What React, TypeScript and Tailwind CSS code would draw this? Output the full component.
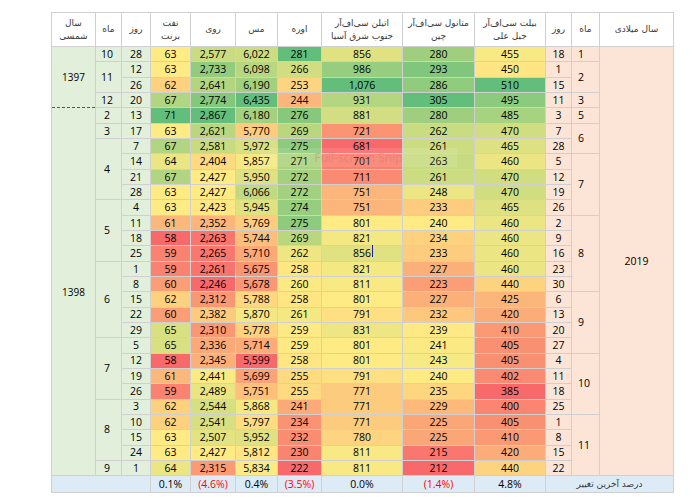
import React from "react"

// brent, zinc, copper, urea, ethylene, methanol, billet
const rows: number[][] = [
  [63, 2577, 6022, 281, 856, 280, 455],
  [63, 2733, 6098, 266, 986, 293, 450],
  [62, 2641, 6190, 253, 1076, 286, 510],
  [67, 2774, 6435, 244, 931, 305, 495],
  [71, 2867, 6180, 276, 881, 280, 485],
  [63, 2621, 5770, 269, 721, 262, 470],
  [67, 2581, 5972, 275, 681, 261, 465],
  [64, 2404, 5857, 271, 701, 263, 460],
  [67, 2427, 5950, 272, 711, 261, 470],
  [63, 2427, 6066, 272, 751, 248, 470],
  [63, 2423, 5945, 274, 751, 233, 465],
  [61, 2352, 5769, 275, 801, 240, 460],
  [58, 2263, 5744, 269, 821, 234, 460],
  [59, 2265, 5710, 262, 856, 233, 460],
  [59, 2261, 5675, 258, 821, 227, 460],
  [60, 2246, 5678, 260, 811, 223, 440],
  [62, 2312, 5788, 258, 801, 227, 425],
  [60, 2382, 5870, 261, 791, 232, 420],
  [65, 2310, 5778, 259, 831, 239, 410],
  [65, 2336, 5714, 259, 801, 241, 405],
  [58, 2345, 5599, 258, 801, 243, 405],
  [61, 2441, 5699, 255, 791, 240, 402],
  [59, 2489, 5751, 255, 771, 235, 385],
  [62, 2544, 5868, 241, 771, 229, 400],
  [62, 2541, 5797, 234, 771, 225, 405],
  [63, 2507, 5952, 232, 780, 225, 410],
  [63, 2427, 5812, 230, 811, 215, 420],
  [64, 2315, 5834, 222, 811, 212, 440],
]

type Group = { label: string; n: number }

const shamsiYears: Group[] = [
  { label: "1397", n: 4 },
  { label: "1398", n: 24 },
]
const shamsiMonths: Group[] = [
  { label: "10", n: 1 }, { label: "11", n: 2 }, { label: "12", n: 1 },
  { label: "2", n: 1 }, { label: "3", n: 1 }, { label: "4", n: 4 },
  { label: "5", n: 4 }, { label: "6", n: 5 }, { label: "7", n: 4 },
  { label: "8", n: 4 }, { label: "9", n: 1 },
]
const shamsiDays = [28, 12, 26, 20, 13, 17, 7, 14, 21, 28, 4, 11, 18, 25, 1, 8, 15, 22, 29, 5, 12, 19, 26, 3, 10, 15, 24, 1]

const miladiMonths: Group[] = [
  { label: "1", n: 1 }, { label: "2", n: 2 }, { label: "3", n: 1 },
  { label: "5", n: 1 }, { label: "6", n: 2 }, { label: "7", n: 4 },
  { label: "8", n: 5 }, { label: "9", n: 4 }, { label: "10", n: 4 },
  { label: "11", n: 4 },
]
const miladiDays = [18, 1, 15, 11, 3, 7, 28, 5, 12, 19, 26, 2, 9, 16, 23, 30, 6, 13, 20, 27, 4, 11, 18, 25, 1, 8, 15, 22]

const footer = [
  { text: "0.1%", neg: false },
  { text: "(4.6%)", neg: true },
  { text: "0.4%", neg: false },
  { text: "(3.5%)", neg: true },
  { text: "0.0%", neg: false },
  { text: "(1.4%)", neg: true },
  { text: "4.8%", neg: false },
]

const headers: string[][] = [
  ["سال", "شمسی"],
  ["ماه"],
  ["روز"],
  ["نفت", "برنت"],
  ["روی"],
  ["مس"],
  ["اوره"],
  ["اتیلن سی‌اف‌آر", "جنوب شرق آسیا"],
  ["متانول سی‌اف‌آر", "چین"],
  ["بیلت سی‌اف‌آر", "جبل علی"],
  ["روز"],
  ["ماه"],
  ["سال میلادی"],
]

const colWidths = [44, 26, 29, 40, 45, 42, 44, 81, 72, 71, 26, 28, 74]

function startsOf(groups: Group[]) {
  const m = new Map<number, Group>()
  let i = 0
  for (const g of groups) {
    m.set(i, g)
    i += g.n
  }
  return m
}

// Excel style 3-colour scale: min red, 50th percentile yellow, max green
function scaleFor(values: number[]) {
  const sorted = [...values].sort((a, b) => a - b)
  const min = sorted[0]
  const max = sorted[sorted.length - 1]
  const pos = (sorted.length - 1) * 0.5
  const lo = Math.floor(pos)
  const mid = sorted[lo] + (sorted[lo + 1] - sorted[lo]) * (pos - lo)
  const red = [248, 105, 107]
  const yel = [255, 235, 132]
  const grn = [99, 190, 123]
  const mix = (a: number[], b: number[], t: number) =>
    `rgb(${a.map((c, k) => Math.round(c + (b[k] - c) * t)).join(",")})`
  return (v: number) =>
    v <= mid ? mix(red, yel, mid === min ? 1 : (v - min) / (mid - min)) : mix(yel, grn, (v - mid) / (max - mid))
}

const scales = rows[0].map((_, c) => scaleFor(rows.map((r) => r[c])))

const fa = "font-[Tahoma,'DejaVu_Sans',sans-serif]"
const cell = "border border-[#d0d0d0] p-0 text-center align-middle"

export default function App() {
  const yStarts = startsOf(shamsiYears)
  const mStarts = startsOf(shamsiMonths)
  const rmStarts = startsOf(miladiMonths)

  return (
    <div className="min-h-[497px] bg-white pl-[51px] pt-[12px]">
      <div className="relative w-[622px]">
        <table className="w-[622px] table-fixed border-collapse text-[10.5px] leading-none text-black font-['Open_Sans',sans-serif]">
          <colgroup>
            {colWidths.map((w, i) => (
              <col key={i} style={{ width: w }} />
            ))}
          </colgroup>
          <thead>
            <tr className="h-[34px]">
              {headers.map((lines, i) => (
                <th key={i} dir="rtl" className={`${cell} ${fa} text-[9px] font-normal leading-[13px] text-[#3a3a3a]`}>
                  {lines.map((l, k) => (
                    <div key={k}>{l}</div>
                  ))}
                </th>
              ))}
            </tr>
          </thead>
          <tbody>
            {rows.map((r, i) => {
              const y = yStarts.get(i)
              const m = mStarts.get(i)
              const rm = rmStarts.get(i)
              return (
                <tr key={i} className="h-[15.33px]">
                  {y && (
                    <td
                      rowSpan={y.n}
                      className={`${cell} bg-[#e2efda] text-[10px] ${
                        i === 0 ? "border-b-0" : "[border-top-style:dashed] border-t-[#555]"
                      }`}
                    >
                      {y.label}
                    </td>
                  )}
                  {m && (
                    <td rowSpan={m.n} className={`${cell} bg-[#e2efda] pr-[3px]`}>
                      {m.label}
                    </td>
                  )}
                  <td className={`${cell} bg-[#e2efda]`}>{shamsiDays[i]}</td>
                  {r.map((v, c) => (
                    <td key={c} className={cell} style={{ backgroundColor: scales[c](v) }}>
                      {i === 13 && c === 4 ? (
                        <span className="relative">
                          {v.toLocaleString("en-US")}
                          <span className="absolute -right-[2px] top-[-1px] h-[12px] w-px bg-[#1c1c9c]" />
                        </span>
                      ) : (
                        v.toLocaleString("en-US")
                      )}
                    </td>
                  ))}
                  <td className={`${cell} bg-[#fce4d6]`}>{miladiDays[i]}</td>
                  {rm && (
                    <td rowSpan={rm.n} className={`${cell} bg-[#fce4d6] pl-[6px] text-left`}>
                      {rm.label}
                    </td>
                  )}
                  {i === 0 && (
                    <td rowSpan={rows.length} className={`${cell} bg-[#fce4d6]`}>
                      2019
                    </td>
                  )}
                </tr>
              )
            })}
            <tr className="h-[17px] bg-[#ddebf7]">
              <td colSpan={3} className={cell} />
              {footer.map((f, i) => (
                <td key={i} className={`${cell} ${f.neg ? "text-[#ff0000]" : ""}`}>
                  {f.text}
                </td>
              ))}
              <td colSpan={3} dir="rtl" className={`${cell} ${fa} text-[9px] text-[#3a3a3a]`}>
                درصد آخرین تغییر
              </td>
            </tr>
          </tbody>
        </table>

        {/* snipping tool hint left over on the capture */}
        <div className="pointer-events-none absolute left-[209px] top-[136px] flex h-[19px] w-[197px] items-center justify-center bg-white/10 font-['Open_Sans',sans-serif] text-[12px] text-[rgba(215,110,110,0.45)]">
          Full-screen Snip
        </div>
      </div>
    </div>
  )
}
